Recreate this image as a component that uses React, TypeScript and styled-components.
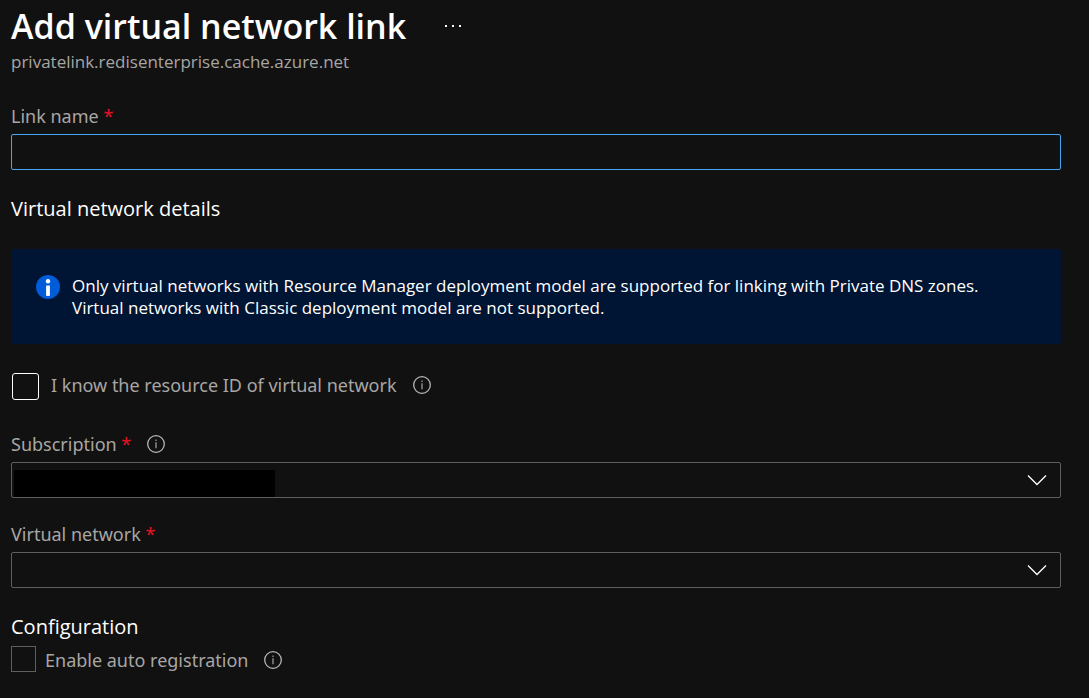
import React from "react";
import styled, { createGlobalStyle } from "styled-components";

const GlobalStyle = createGlobalStyle`
  * { box-sizing: border-box; }
  body {
    margin: 0;
    background: #111111;
    color: #ffffff;
    font-family: "Open Sans", "Noto Sans", sans-serif;
    font-size: 18px;
  }
`;

const Page = styled.main`
  padding: 2px 28px 24px 11px;
`;

const TitleRow = styled.div`
  display: flex;
  align-items: center;
  gap: 34px;
`;

const Title = styled.h1`
  margin: 0;
  font-size: 34px;
  font-weight: 600;
  line-height: 48px;
`;

const MoreButton = styled.button`
  display: flex;
  padding: 4px;
  border: 0;
  background: none;
  color: #ffffff;
`;

const Subtitle = styled.p`
  margin: 0;
  color: #a8a6a4;
  font-size: 17px;
  line-height: 24px;
`;

const Field = styled.div<{ $gap: number }>`
  display: flex;
  flex-direction: column;
  gap: 6px;
  margin-top: ${(p) => p.$gap}px;
`;

const LabelRow = styled.div`
  display: flex;
  align-items: center;
  gap: 16px;
  color: #a8a6a4;
  font-family: "Noto Sans", sans-serif;
  line-height: 24px;
`;

const Required = styled.span`
  color: #e81123;
`;

const TextInput = styled.input`
  width: 100%;
  height: 36px;
  padding: 0 8px;
  border: 1px solid #4aa5f0;
  border-radius: 2px;
  outline: none;
  background: #111111;
  color: #ffffff;
  font: inherit;
`;

const SelectBox = styled.div`
  position: relative;
`;

const Select = styled.select`
  display: block;
  width: 100%;
  height: 36px;
  padding: 0 48px 0 8px;
  border: 1px solid #605e5c;
  border-radius: 2px;
  appearance: none;
  background: #111111;
  color: #ffffff;
  font: inherit;
`;

const Chevron = styled.svg`
  position: absolute;
  top: 12px;
  right: 14px;
  pointer-events: none;
`;

const HiddenValue = styled.span`
  position: absolute;
  top: 8px;
  left: 3px;
  width: 261px;
  height: 27px;
  background: #000000;
  pointer-events: none;
`;

const SectionTitle = styled.h2<{ $gap: number }>`
  margin: ${(p) => p.$gap}px 0 0;
  font-size: 20px;
  font-weight: 400;
  line-height: 28px;
`;

const Banner = styled.div`
  display: flex;
  align-items: flex-start;
  gap: 12px;
  margin-top: 26px;
  padding: 26px 25px 25px;
  border-radius: 3px;
  background: #001433;
`;

const BannerText = styled.p`
  margin: 0;
  font-size: 17px;
  line-height: 22px;
`;

const CheckRow = styled.div<{ $gap: number; $space: number; $align: string }>`
  display: flex;
  align-items: ${(p) => p.$align};
  gap: ${(p) => p.$space}px;
  margin-top: ${(p) => p.$gap}px;
`;

const Checkbox = styled.input<{ $strong?: boolean }>`
  flex: none;
  width: ${(p) => (p.$strong ? 27 : 25)}px;
  height: ${(p) => (p.$strong ? 27 : 26)}px;
  margin: 0 0 0 ${(p) => (p.$strong ? 1 : 0)}px;
  border: 1px solid ${(p) => (p.$strong ? "#ffffff" : "#605e5c")};
  border-radius: ${(p) => (p.$strong ? 3 : 0)}px;
  appearance: none;
  background: #111111;
`;

const InfoIcon = () => (
  <svg width="18" height="18" viewBox="0 0 18 18" fill="none" aria-hidden="true">
    <circle cx="9" cy="9" r="8.3" stroke="#b8b6b4" strokeWidth="1.3" />
    <path d="M9 7.3V13.3M9 4.5V6" stroke="#8a8886" strokeWidth="1.5" />
  </svg>
);

const BannerIcon = () => (
  <svg width="24" height="24" viewBox="0 0 24 24" aria-hidden="true">
    <circle cx="12" cy="12" r="12" fill="#015cda" />
    <circle cx="12" cy="6.2" r="2.2" fill="#ffffff" />
    <path d="M10.1 10.5h3.8v10.4h-3.8z" fill="#ffffff" />
  </svg>
);

const DownIcon = () => (
  <Chevron width="20" height="12" viewBox="0 0 20 12" fill="none" aria-hidden="true">
    <path d="M1 1.5L10 10.5L19 1.5" stroke="#ffffff" strokeWidth="1.3" />
  </Chevron>
);

export default function App() {
  return (
    <>
      <GlobalStyle />
      <Page>
        <TitleRow>
          <Title>Add virtual network link</Title>
          <MoreButton type="button" aria-label="More actions">
            <svg width="18" height="4" viewBox="0 0 18 4" fill="currentColor">
              <path d="M1 1h2v2h-2zM8 1h2v2h-2zM15 1h2v2h-2z" />
            </svg>
          </MoreButton>
        </TitleRow>
        <Subtitle>privatelink.redisenterprise.cache.azure.net</Subtitle>

        <Field $gap={30}>
          <LabelRow>
            <label htmlFor="link-name">
              Link name <Required>*</Required>
            </label>
          </LabelRow>
          <TextInput id="link-name" type="text" required />
        </Field>

        <SectionTitle $gap={25}>Virtual network details</SectionTitle>
        <Banner role="note">
          <BannerIcon />
          <BannerText>
            Only virtual networks with Resource Manager deployment model are supported for linking with Private DNS zones.
            <br />
            Virtual networks with Classic deployment model are not supported.
          </BannerText>
        </Banner>

        <CheckRow $gap={29} $space={12} $align="flex-start">
          <Checkbox $strong id="know-id" type="checkbox" />
          <LabelRow>
            <label htmlFor="know-id">I know the resource ID of virtual network</label>
            <InfoIcon />
          </LabelRow>
        </CheckRow>

        <Field $gap={32}>
          <LabelRow>
            <label htmlFor="subscription">
              Subscription <Required>*</Required>
            </label>
            <InfoIcon />
          </LabelRow>
          <SelectBox>
            <Select id="subscription" required />
            <HiddenValue />
            <DownIcon />
          </SelectBox>
        </Field>

        <Field $gap={24}>
          <LabelRow>
            <label htmlFor="virtual-network">
              Virtual network <Required>*</Required>
            </label>
          </LabelRow>
          <SelectBox>
            <Select id="virtual-network" required />
            <DownIcon />
          </SelectBox>
        </Field>

        <SectionTitle $gap={25}>Configuration</SectionTitle>
        <CheckRow $gap={5} $space={9} $align="flex-end">
          <Checkbox id="auto-registration" type="checkbox" />
          <LabelRow>
            <label htmlFor="auto-registration">Enable auto registration</label>
            <InfoIcon />
          </LabelRow>
        </CheckRow>
      </Page>
    </>
  );
}
